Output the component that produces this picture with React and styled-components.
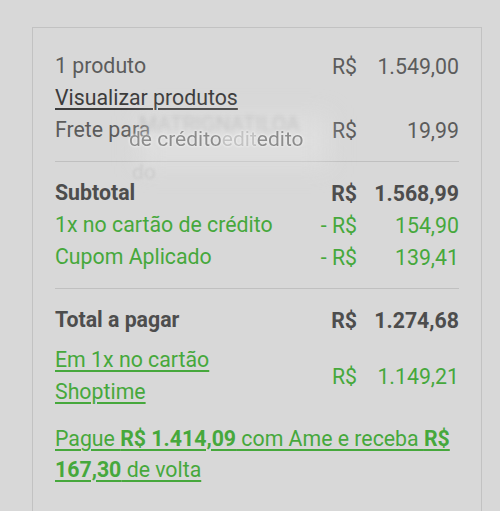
import styled, { createGlobalStyle } from "styled-components";

const Global = createGlobalStyle`
  html, body {
    margin: 0;
    padding: 0;
    background: #d8d8d8;
    font-family: Roboto, "Liberation Sans", sans-serif;
  }
`;

const Page = styled.div`
  padding: 27px 18px 0 32px;
  height: 511px;
  box-sizing: border-box;
  overflow: hidden;
`;

const Card = styled.div`
  position: relative;
  border: 1.5px solid #c2c2c2;
  border-bottom: none;
  padding: 22px 22px 40px 22px;
  min-height: 520px;
  box-sizing: border-box;
`;

const Row = styled.div`
  display: grid;
  grid-template-columns: 1fr 70px 102px;
  align-items: center;
  min-height: 31.5px;
  margin-top: ${(p) => p.$mt || 0}px;
  font-size: 21.3px;
  color: ${(p) => (p.$green ? "#46a83c" : p.$strong ? "#4d4d4d" : "#5c5c5c")};
  font-weight: ${(p) => (p.$strong ? 700 : 400)};
`;

const Label = styled.span`
  line-height: 32px;
  white-space: nowrap;
`;

const LinkText = styled.a`
  color: ${(p) => p.$color || "inherit"};
  text-decoration: underline;
  text-underline-offset: 3px;
  text-decoration-thickness: 1.5px;
`;

const Currency = styled.span`
  text-align: right;
  white-space: nowrap;
`;

const Value = styled.span`
  text-align: right;
`;

const Divider = styled.hr`
  border: none;
  border-top: 1.5px solid #c0c0c0;
  margin: 15px 0;
`;

const Promo = styled.p`
  margin: 15px 0 0;
  font-size: 21.3px;
  line-height: 31px;
  color: #46a83c;
  text-decoration: underline;
  text-underline-offset: 3px;
  text-decoration-thickness: 1.5px;
  b {
    font-weight: 700;
  }
`;

const Ghost = styled.div`
  position: absolute;
  left: 96px;
  top: 70px;
  width: 220px;
  height: 100px;
  pointer-events: none;
`;

const GhostHaze = styled.div`
  position: absolute;
  left: 10px;
  top: 18px;
  width: 190px;
  height: 50px;
  background: rgba(230, 230, 230, 0.45);
  filter: blur(12px);
`;

const GhostText = styled.span`
  position: absolute;
  left: ${(p) => p.$x}px;
  top: ${(p) => p.$y}px;
  font-size: 21px;
  white-space: nowrap;
  color: ${(p) => p.$c};
  filter: blur(${(p) => p.$b}px);
  text-shadow: ${(p) => (p.$halo ? "0 0 2px #f2f2f2, 0 0 3px #f2f2f2" : "none")};
`;

export default function App() {
  return (
    <>
      <Global />
      <Page>
        <Card>
          <Row>
            <Label>1 produto</Label>
            <Currency>R$</Currency>
            <Value>1.549,00</Value>
          </Row>
          <Row>
            <Label>
              <LinkText $color="#3c3c3c">Visualizar produtos</LinkText>
            </Label>
          </Row>
          <Row>
            <Label>Frete para</Label>
            <Currency>R$</Currency>
            <Value>19,99</Value>
          </Row>

          <Divider />

          <Row $strong>
            <Label>Subtotal</Label>
            <Currency>R$</Currency>
            <Value>1.568,99</Value>
          </Row>
          <Row $green>
            <Label>1x no cartão de crédito</Label>
            <Currency>- R$</Currency>
            <Value>154,90</Value>
          </Row>
          <Row $green>
            <Label>Cupom Aplicado</Label>
            <Currency>- R$</Currency>
            <Value>139,41</Value>
          </Row>

          <Divider />

          <Row $strong>
            <Label>Total a pagar</Label>
            <Currency>R$</Currency>
            <Value>1.274,68</Value>
          </Row>
          <Row $green $mt={8}>
            <Label>
              <LinkText>
                Em 1x no cartão
                <br />
                Shoptime
              </LinkText>
            </Label>
            <Currency>R$</Currency>
            <Value>1.149,21</Value>
          </Row>

          <Promo>
            Pague <b>R$ 1.414,09</b> com Ame e receba <b>R$ 167,30</b> de volta
          </Promo>

          <Ghost>
            <GhostHaze />
            <GhostText $x={10} $y={14} $c="rgba(130,130,130,0.25)" $b={2}>
              MATRIGNATILOA
            </GhostText>
            <GhostText $x={3} $y={62} $c="rgba(175,175,175,0.3)" $b={1.2}>
              do
            </GhostText>
            <GhostText $x={0} $y={29} $c="#8c8c8c" $b={0.3} $halo>
              de crédito
              <span style={{ color: "rgba(150,150,150,0.5)" }}>edit</span>
              edito
            </GhostText>
          </Ghost>
        </Card>
      </Page>
    </>
  );
}
